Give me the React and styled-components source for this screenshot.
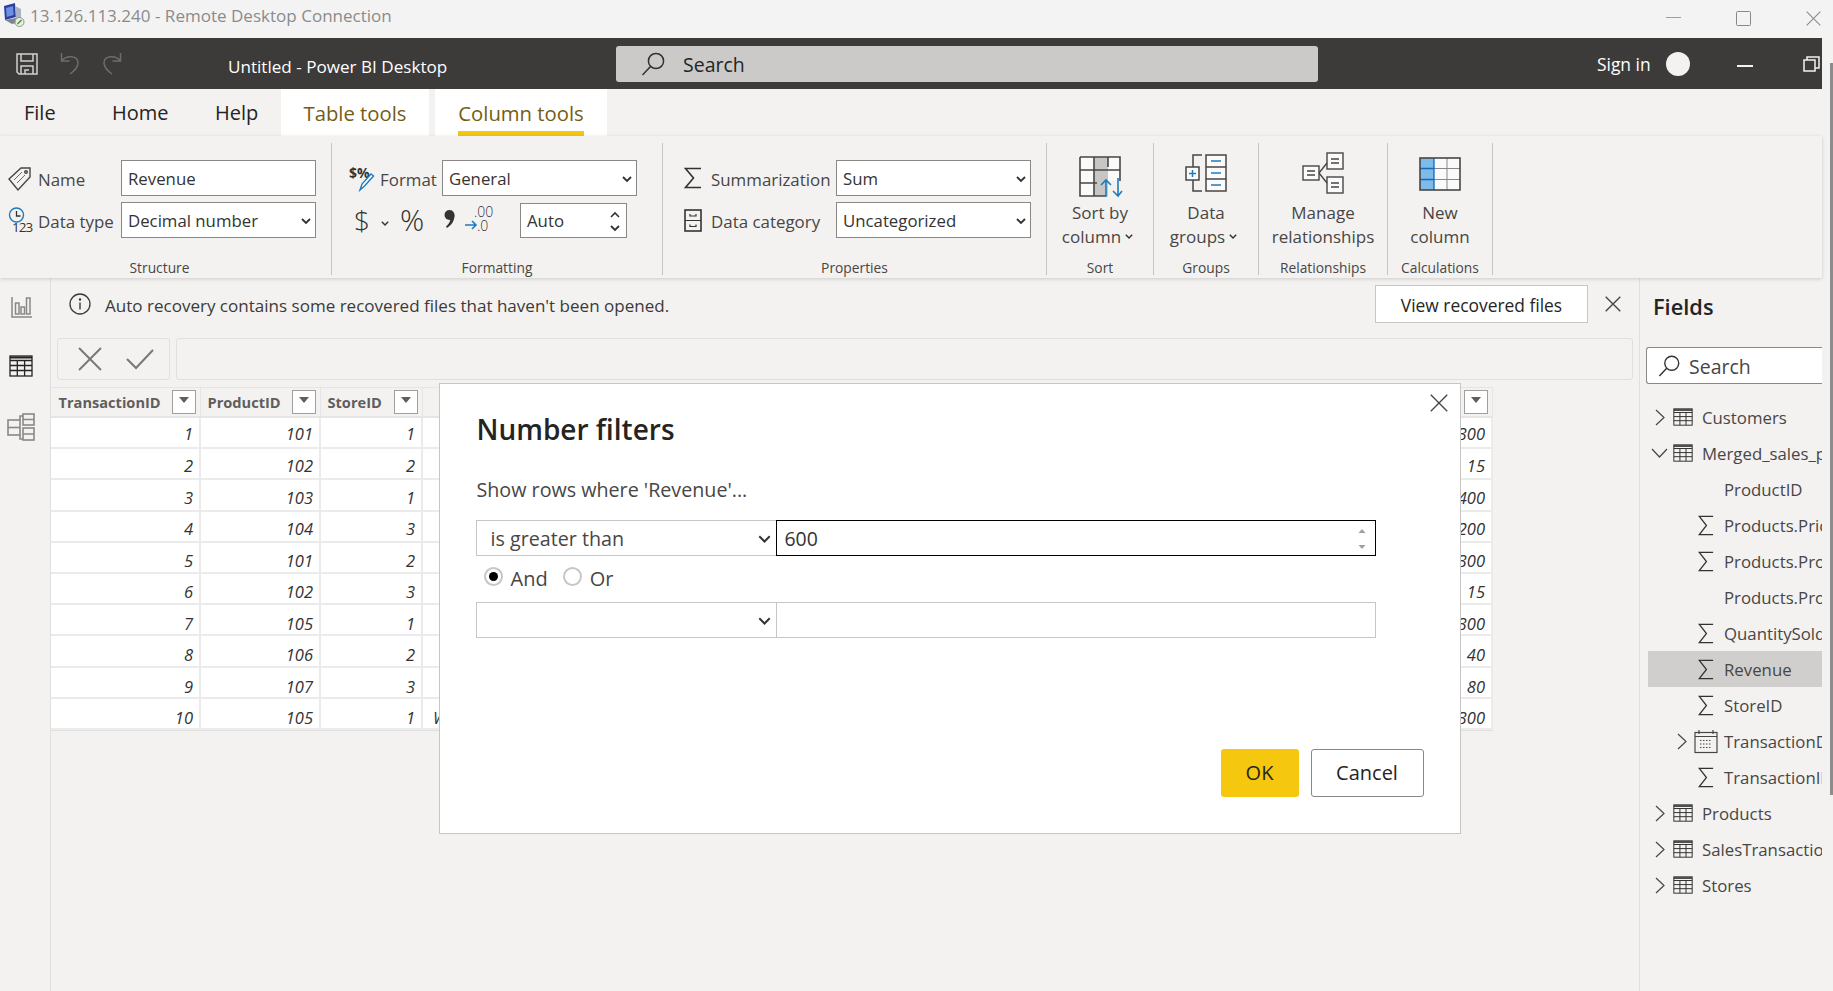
import React from "react";
import styled, { createGlobalStyle } from "styled-components";

const FONT = `"Open Sans","Noto Sans",sans-serif`;

const Global = createGlobalStyle`
  html, body { margin: 0; padding: 0; background: #f3f2f1; overflow: hidden; }
  * { box-sizing: border-box; }
  body { font-family: ${FONT}; color: #333; }
  svg { overflow: visible; flex: none; }
`;

const Page = styled.div`
  position: relative; width: 1833px; height: 991px; overflow: hidden;
  display: flex; flex-direction: column; background: #f3f2f1;
`;
const TitleBar = styled.div`
  height: 38px; flex: none; display: flex; align-items: center; padding: 0 0 8px 3px; background: #f3f3f3;
`;
const TitleText = styled.span`
  margin-left: 4px; font-size: 17.05px; color: #8b8b8b; white-space: nowrap;
`;
const WinControls = styled.div`
  margin-left: auto; display: flex; align-items: center; gap: 55px; padding-right: 12px; margin-top: 6px;
`;
const Frame = styled.div`flex: 1; display: flex; min-height: 0;`;
const Content = styled.div`width: 1822px; flex: none; display: flex; flex-direction: column; min-height: 0;`;
const Gutter = styled.div`flex: 1; padding: 25px 0 0 8px;`;
const Thumb = styled.div`width: 3px; height: 732px; background: #8c8c8c;`;

const DarkBar = styled.div`
  height: 51px; flex: none; display: flex; align-items: center; background: #3c3b3a; padding-left: 16px;
`;
const QuickIcons = styled.div`display: flex; align-items: center; gap: 22px; width: 212px;`;
const AppTitle = styled.span`width: 388px; color: #fff; font-size: 17.1px; white-space: nowrap; padding-top: 5px;`;
const TopSearch = styled.div`
  width: 702px; height: 36px; display: flex; align-items: center; gap: 18px; padding: 0 0 0 25px;
  background: #cbcac8; border-radius: 3px; color: #252423; font-size: 19.5px;
`;
const SearchWord = styled.span`padding-top: 2px;`;
const DarkRight = styled.div`
  margin-left: 279px; display: flex; align-items: center; color: #fff; font-size: 17.4px; white-space: nowrap;
`;
const SignIn = styled.span`width: 54px;`;
const Avatar = styled.span`width: 24px; height: 24px; margin: 0 47px 0 15px; border-radius: 50%; background: #f3f2f1;`;
const DashLine = styled.span`width: 16px; height: 2px; background: #f3f2f1; margin-right: 50px; margin-top: 4px;`;

const TabRow = styled.div`height: 47px; flex: none; display: flex;`;
const Tab = styled.div`
  width: ${p => p.$w}px; margin-left: ${p => p.$ml}px; display: flex; align-items: center; font-size: 20px; color: #252423; white-space: nowrap;
`;
const ContextTab = styled.div`
  width: ${p => p.$w}px; margin-left: ${p => p.$ml}px; background: #fff; display: flex; justify-content: center;
  font-size: 20.3px; color: #735d16; white-space: nowrap;
`;
const TabLabel = styled.span`
  display: flex; align-items: center; padding-top: 5px; border-bottom: 5px solid ${p => (p.$on ? "#f2c811" : "transparent")};
`;
const Ribbon = styled.div`
  height: 142px; flex: none; display: flex; padding-top: 7px; background: #f3f2f1;
  box-shadow: 0 1px 4px rgba(0,0,0,.16); position: relative; z-index: 1;
`;
const Group = styled.div`
  width: ${p => p.$w}px; height: 132px; flex: none; display: flex; flex-direction: column; border-right: 1.5px solid #c8c6c4;
`;
const GroupBody = styled.div`
  flex: 1; display: flex; flex-direction: column; gap: 6px; padding: 17px 0 0 ${p => p.$pl || 0}px;
`;
const GroupLabel = styled.div`
  height: 14px; line-height: 14px; text-align: center; font-size: 13.8px; color: #484644; white-space: nowrap;
  padding-right: ${p => p.$pr || 0}px;
`;
const FieldRow = styled.div`
  display: grid; grid-template-columns: ${p => p.$ic}px ${p => p.$lb}px 195px; grid-template-rows: 36px; align-items: center; height: 36px;
  font-size: 16.9px; color: #484644; white-space: nowrap;
`;
const FieldLabel = styled.span`padding-top: 2px;`;
const Box = styled.div`
  height: 36px; display: flex; align-items: center; justify-content: space-between; padding: 2px 4px 0 6px;
  background: #fff; border: 1.5px solid #8a8886; font-size: 16.8px; color: #333; line-height: 1.2;
`;
const NumTools = styled.div`display: flex; align-items: center; height: 36px; padding-left: 5px; color: #323130;`;
const Glyph = styled.span`width: ${p => p.$w}px; flex: none; line-height: 1; font-size: ${p => p.$fs || 16}px; font-weight: 300;`;
const AutoBox = styled(Box)`width: 107px; height: 35px; margin-left: 22px; padding-right: 6px;`;
const Spin = styled.span`display: flex; flex-direction: column; gap: 7px;`;
const BigBody = styled.div`
  flex: 1; display: flex; flex-direction: column; align-items: center; padding-top: 9px;
  font-size: 17px; line-height: 24px; color: #484644; white-space: nowrap;
`;
const BigIcon = styled.div`height: 48.5px; display: flex; align-items: flex-end; padding-bottom: ${p => p.$pb ?? 1}px;`;
const MoreLine = styled.span`display: flex; align-items: center; gap: 4px; padding-right: 5px;`;

const Body = styled.div`flex: 1; display: flex; min-height: 0;`;
const SideBar = styled.div`
  width: 51px; flex: none; display: flex; flex-direction: column; align-items: center; border-right: 1px solid #e1dfdd; padding-top: 19px;
`;
const SideSlot = styled.div`height: ${p => p.$h}px; display: flex; justify-content: center; padding-right: ${p => p.$pr ?? 9}px;`;
const Center = styled.div`width: 1588px; flex: none; display: flex; flex-direction: column;`;
const Notice = styled.div`
  height: 52px; flex: none; display: flex; align-items: center; padding: 0 18px; font-size: 17.05px; color: #3b3a39;
`;
const NoticeText = styled.span`margin-left: 14px; white-space: nowrap; flex: 1; padding-top: 2px;`;
const ViewButton = styled.div`
  width: 213px; height: 38px; display: flex; align-items: center; justify-content: center; background: #fff;
  border: 1px solid #c8c6c4; font-size: 17.4px; font-weight: 500; color: #252423; margin-right: 17px; padding-top: 1px;
`;
const FormulaRow = styled.div`display: flex; gap: 6px; height: 42px; margin: 8px 0 7px 6px; flex: none;`;
const FormulaBtns = styled.div`
  width: 113px; display: flex; align-items: center; gap: 24px; padding-left: 20px;
  border: 1px solid #e1dfdd; border-radius: 3px;
`;
const FormulaBox = styled.div`width: 1457px; border: 1px solid #e1dfdd; border-radius: 3px;`;
const Table = styled.div`
  width: 1442px; display: grid; grid-template-columns: 150px 120px 102px 990px 80px;
  grid-template-rows: 31px repeat(10, 31.2px); border-bottom: 1px solid #e1dfdd;
`;
const HeadCell = styled.div`
  display: flex; align-items: center; justify-content: space-between; padding: 0 4px 0 6.5px;
  background: #f3f2f1; border: 1px solid #e6e5e3; border-left: 0; border-bottom-width: 2px;
  font-size: 14.6px; font-weight: 700; color: #605e5c; white-space: nowrap;
  &:first-child { padding: 0 4.5px 0 7.5px; }
`;
const FilterBtn = styled.span`
  width: 24px; height: 24px; display: flex; align-items: center; justify-content: center; padding-bottom: 5px;
  background: #fff; border: 1px solid #a19f9d;
  &::after { content: ""; border: 5px solid transparent; border-top: 6px solid #605e5c; border-bottom: 0; }
`;
const Cell = styled.div`
  display: flex; align-items: center; justify-content: ${p => (p.$left ? "flex-start" : "flex-end")};
  padding: ${p => 4.3 + p.$i * 0.66}px ${p => (p.$left ? 0 : 6)}px 0 ${p => (p.$left ? 10 : 0)}px;
  background: #fff; border-right: 2px solid #ebebeb; border-bottom: 2px solid #ebebeb;
  font-size: 16.5px; font-style: italic; color: #333; line-height: 1;
`;
const FieldsPanel = styled.div`
  width: 183px; flex: none; border-left: 1px solid #e1dfdd; display: flex; flex-direction: column; overflow: hidden;
`;
const FieldsTitle = styled.div`height: 69px; padding: 11px 0 0 13px; font-size: 21.8px; line-height: 36px; font-weight: 600; color: #252423;`;
const FieldSearch = styled.div`
  margin-left: 6px; height: 37px; flex: none; display: flex; align-items: center; gap: 9px; padding-left: 11px;
  background: #fff; border: 1.5px solid #8a8886; border-right: 0; border-radius: 3px 0 0 3px; font-size: 19.5px; color: #484644;
`;
const Tree = styled.div`margin: 15px 0 0 8px;`;
const TreeRow = styled.div`
  height: 36px; display: flex; align-items: center; padding-left: ${p => p.$pl}px; white-space: nowrap; overflow: hidden;
  font-size: 16.8px; color: #484644; background: ${p => (p.$sel ? "#d0cfcd" : "transparent")};
`;
const IconSlot = styled.span`width: ${p => p.$w}px; margin-right: ${p => p.$mr}px; flex: none; display: flex; align-items: center;`;

const Dialog = styled.div`
  position: absolute; left: 439px; top: 383px; width: 1022px; height: 451px; z-index: 5; background: #fff;
  border: 1.5px solid #c8c6c4; display: flex; flex-direction: column; padding: 25.5px 36.5px 36.5px 35.5px;
`;
const DialogClose = styled.span`position: absolute; top: 10px; right: 12px; display: flex;`;
const DialogTitle = styled.div`height: 40px; margin-top: -1px; margin-bottom: 1px; padding-left: 1px; line-height: 40px; font-size: 28px; font-weight: 600; color: #252423;`;
const DialogHint = styled.div`margin-top: 26px; height: 28px; padding-left: 1px; line-height: 28px; font-size: 19.7px; color: #484644;`;
const FilterRow = styled.div`margin-top: ${p => p.$mt || 0}px; display: flex; height: 36px; flex: none; width: 900px;`;
const FilterSelect = styled.div`
  width: 300px; flex: none; display: flex; align-items: center; justify-content: space-between; padding: 2px 5px 0 14px;
  border: 1.5px solid #c8c6c4; border-right: 0; font-size: 19.7px; color: #484644;
`;
const FilterInput = styled.div`
  flex: 1; display: flex; align-items: center; justify-content: space-between; padding: 2px 9px 0 8px;
  border: 1.5px solid ${p => (p.$focus ? "#000" : "#c8c6c4")}; font-size: 19.4px; color: #333;
`;
const Radios = styled.div`height: 46px; display: flex; align-items: center; padding: 0 0 0 8px; font-size: 20px; color: #484644;`;
const Radio = styled.span`
  width: 19px; height: 19px; flex: none; margin: 0 8px 4px ${p => p.$ml || 0}px; border: 2.5px solid #c8c6c4; border-radius: 50%;
  display: flex; align-items: center; justify-content: center; background: #fff;
  &::after { content: ""; width: 9px; height: 9px; border-radius: 50%; background: ${p => (p.$on ? "#000" : "transparent")}; }
`;
const Footer = styled.div`margin-top: auto; display: flex; justify-content: flex-end; gap: 12px;`;
const DlgBtn = styled.div`
  width: ${p => p.$w}px; height: 48px; display: flex; align-items: center; justify-content: center; border-radius: 3px;
  font-size: 20px; color: #252423; background: ${p => (p.$primary ? "#f6c70f" : "#fff")};
  border: ${p => (p.$primary ? "0" : "1.5px solid #8a8886")};
`;

/* ---------- drawings ---------- */
const Chevron = ({ s = 10, c = "#333", w = 1.8 }) => (
  <svg width={s} height={s * 0.6} viewBox="0 0 10 6"><path d="M1 1l4 4 4-4" fill="none" stroke={c} strokeWidth={w} /></svg>
);
const ChevUp = () => (
  <svg width="10" height="6" viewBox="0 0 10 6"><path d="M1 5l4-4 4 4" fill="none" stroke="#333" strokeWidth="1.6" /></svg>
);
const Cross = ({ s = 16, c = "#484644", w = 1.4 }) => (
  <svg width={s} height={s} viewBox="0 0 16 16"><path d="M.7.7l14.6 14.6M15.3.7L.7 15.3" fill="none" stroke={c} strokeWidth={w} /></svg>
);
const RemoteIcon = () => (
  <svg width="23" height="25" viewBox="0 0 23 25">
    <path d="M1 3l11-3 1 14-11 3z" fill="#2b3f9e" /><path d="M3 5l7-2 .7 9-7 2z" fill="#6f8fe0" />
    <path d="M12 3l6 3v13l-5-2z" fill="#a9b2c6" /><path d="M2 17l11-2 5 4-9 2z" fill="#7d8494" />
    <circle cx="16.5" cy="19" r="4.5" fill="#e8efe4" stroke="#8b9a84" /><path d="M14.5 21l4-4" stroke="#3f9b3c" strokeWidth="1.6" />
  </svg>
);
const SaveIcon = () => (
  <svg width="22" height="22" viewBox="0 0 22 22" fill="none" stroke="#d2d0ce" strokeWidth="1.5">
    <path d="M1 1h20v20H3l-2-2z" /><path d="M5 1v7h12V1M5 21v-8h12v8M9 21v-4h4" />
  </svg>
);
const UndoIcon = ({ flip }) => (
  <svg width="20" height="23" viewBox="0 0 20 23" fill="none" stroke="#6e6d6b" strokeWidth="1.5" transform={flip ? "scale(-1 1)" : undefined}>
    <path d="M1.5 1v8h8" /><path d="M1.5 9C6 3 18 3 18 11c0 5-4 8-8 11" />
  </svg>
);
const SearchGlass = ({ s = 24, c = "#323130" }) => (
  <svg width={s} height={s} viewBox="0 0 24 24" fill="none" stroke={c} strokeWidth="1.5">
    <circle cx="15" cy="9" r="7.6" /><path d="M9.5 14.5L1.5 23" />
  </svg>
);
const TagIcon = () => (
  <svg width="23" height="25" viewBox="0 0 23 25" fill="none" stroke="#484644" strokeWidth="1.4">
    <path d="M1 13L13 2h9v9L10 24z" /><circle cx="18" cy="6" r="1.3" /><path d="M6 14l8-8M9 17l8-8" strokeWidth=".8" />
  </svg>
);
const TypeIcon = () => (
  <svg width="25" height="26" viewBox="0 0 25 26">
    <circle cx="8.5" cy="8" r="7" fill="none" stroke="#1f7bc0" strokeWidth="1.4" />
    <path d="M8.5 4v5h4" fill="none" stroke="#333" strokeWidth="1.3" />
    <text x="4" y="25" fontSize="13.5" fontFamily="Open Sans" fill="#333" letterSpacing="-1">123</text>
  </svg>
);
const FormatIcon = () => (
  <svg width="25" height="25" viewBox="0 0 25 25">
    <text x="0" y="12" fontSize="14" fontWeight="700" fontFamily="Open Sans" fill="#333">$%</text>
    <path d="M11 24l2-6 9-10 2.5 2-9 10z" fill="#fff" stroke="#1f7bc0" strokeWidth="1.4" />
  </svg>
);
const Sigma = ({ w = 18, h = 22, c = "#333", sw = 1.6 }) => (
  <svg width={w} height={h} viewBox="0 0 18 22" preserveAspectRatio="none"><path d="M17 1.5H1.5L9.5 11 1.5 20.5H17" fill="none" stroke={c} strokeWidth={sw} /></svg>
);
const CategoryIcon = () => (
  <svg width="18" height="23" viewBox="0 0 18 23" fill="none" stroke="#333" strokeWidth="1.6">
    <rect x="1" y="1" width="16" height="21" /><path d="M1 11.5h16M6 5v2h6V5M6 15.5v2h6v-2" strokeWidth="1.2" />
  </svg>
);
const Comma = () => (
  <svg width="12" height="20" viewBox="0 0 12 20"><circle cx="6.5" cy="6" r="5" fill="#333" /><path d="M11.5 6c0 6-3 10-7.5 13l-1-1.5C6 15 7.5 12 7.5 9z" fill="#333" /></svg>
);
const DecimalIcon = () => (
  <svg width="26" height="26" viewBox="0 0 26 26">
    <text x="9" y="11" fontSize="14" fontFamily="Open Sans" fill="#333">.00</text>
    <text x="12" y="25" fontSize="14" fontFamily="Open Sans" fill="#333">.0</text>
    <path d="M0 19h11M7 15l4 4-4 4" fill="none" stroke="#1f7bc0" strokeWidth="1.6" />
  </svg>
);
const SortIcon = () => (
  <svg width="42" height="42" viewBox="0 0 42 42" fill="none">
    <rect x="1" y="1" width="14" height="39" fill="#fafafa" /><rect x="29" y="1" width="13" height="24" fill="#fafafa" />
    <rect x="15" y="1" width="14" height="39" fill="#c8c6c4" />
    <path d="M1 1h40v24M1 1v39h26M1 14h40M15 1v39M29 1v10M1 27h17" stroke="#484644" strokeWidth="1.6" />
    <path d="M27 41V24M22 29l5-5 5 5" stroke="#1f7bc0" strokeWidth="1.6" /><path d="M39 22v18M34 35l5 5 4-5" stroke="#1f7bc0" strokeWidth="1.6" />
  </svg>
);
const GroupsIcon = () => (
  <svg width="42" height="38" viewBox="0 0 42 38" fill="none" stroke="#484644" strokeWidth="1.5">
    <rect x="21" y="1" width="20" height="36" fill="#fafafa" /><path d="M21 13h20M21 25h20" />
    <path d="M26 7h10M26 19h10M26 31h10" stroke="#1f7bc0" />
    <path d="M17 1H8v12M8 25v12h9" /><rect x="1" y="13" width="13" height="13" fill="#fafafa" />
    <path d="M7.5 16v7M4 19.5h7" stroke="#1f7bc0" />
  </svg>
);
const RelationIcon = () => (
  <svg width="42" height="42" viewBox="0 0 42 42" fill="none" stroke="#484644" strokeWidth="1.4">
    <rect x="1" y="14" width="16" height="14" fill="#fafafa" /><rect x="25" y="1" width="16" height="16" fill="#fafafa" /><rect x="25" y="25" width="16" height="16" fill="#fafafa" />
    <path d="M17 21l8-10M17 21l8 10M5 19h8M5 23h8M29 7h8M29 11h8M29 31h8M29 35h8" />
  </svg>
);
const NewColIcon = () => (
  <svg width="42" height="34" viewBox="0 0 42 34" fill="none">
    <rect x="1" y="1" width="40" height="32" fill="#fafafa" /><rect x="1" y="1" width="14" height="32" fill="#7fbbe9" />
    <path d="M15 11.5H41M15 22.5H41M28 1v32" stroke="#8a8886" /><path d="M1 11.5h14M1 22.5h14M15 1v32" stroke="#0f6cbd" strokeWidth="1.3" />
    <rect x="1" y="1" width="40" height="32" stroke="#484644" strokeWidth="1.6" />
  </svg>
);
const ReportIcon = () => (
  <svg width="21" height="21" viewBox="0 0 21 21" fill="none" stroke="#8a8886" strokeWidth="1.5">
    <path d="M1 0v20h20" /><rect x="4.5" y="6" width="3.5" height="11" /><rect x="10" y="10" width="3.5" height="7" /><rect x="15.5" y="1" width="3.5" height="16" />
  </svg>
);
const TableIcon = ({ w = 24, h = 22, sw = 1.3, c = "#252423" }) => (
  <svg width={w} height={h} viewBox="0 0 24 22" preserveAspectRatio="none" fill="none" stroke={c} strokeWidth={sw}>
    <rect x="1" y="1" width="22" height="20" /><path d="M1 5.5h22M1 10.5h22M1 15.5h22M8.3 5.5V21M15.6 5.5V21" />
    <path d="M1 2.5h22" strokeWidth="2" />
  </svg>
);
const ModelIcon = () => (
  <svg width="28" height="28" viewBox="0 0 28 28" fill="none" stroke="#8a8886" strokeWidth="1.6">
    <rect x="1" y="7" width="12" height="15" /><path d="M1 14.5h12" />
    <rect x="16" y="1" width="11" height="11" /><path d="M16 6.5h11M13 7V3h3" />
    <rect x="16" y="15" width="11" height="12" /><path d="M16 21h11M13 22v4h3" />
  </svg>
);
const InfoIcon = () => (
  <svg width="22" height="22" viewBox="0 0 22 22" fill="none" stroke="#3b3a39" strokeWidth="1.3">
    <circle cx="11" cy="11" r="10" /><path d="M11 9.5v7" strokeWidth="1.4" /><circle cx="11" cy="6.5" r=".6" />
  </svg>
);
const CheckIcon = () => (
  <svg width="28" height="20" viewBox="0 0 28 20"><path d="M1 10l9 9L27 1" fill="none" stroke="#7a7876" strokeWidth="2" /></svg>
);
const RightChev = () => (
  <svg width="10" height="17" viewBox="0 0 10 17"><path d="M1 1l8 7.5L1 16" fill="none" stroke="#484644" strokeWidth="1.2" /></svg>
);
const DownChev = () => (
  <svg width="17" height="10" viewBox="0 0 17 10"><path d="M1 1l7.5 8L16 1" fill="none" stroke="#484644" strokeWidth="1.2" /></svg>
);
const CalendarIcon = () => (
  <svg width="24" height="23" viewBox="0 0 24 23" fill="none" stroke="#484644" strokeWidth="1.2">
    <rect x="1" y="2.5" width="22" height="20" /><path d="M1 6.5h22M5 0v4M19 0v4" />
    <path d="M6 10.5h12M6 14h12M6 17.5h12" strokeDasharray="1.5 1.5" />
  </svg>
);
const SpinArrows = () => (
  <svg width="8" height="20" viewBox="0 0 8 20"><path d="M4 0l3.5 4H.5zM4 20L.5 16h7z" fill="#a19f9d" /></svg>
);

/* ---------- data ---------- */
const rows = [
  [1, 101, 1, "", 300], [2, 102, 2, "", 15], [3, 103, 1, "", 400], [4, 104, 3, "", 200], [5, 101, 2, "", 300],
  [6, 102, 3, "", 15], [7, 105, 1, "", 300], [8, 106, 2, "", 40], [9, 107, 3, "", 80], [10, 105, 1, "W", 300],
];
const Dropdown = ({ children }) => <Box>{children}<Chevron /></Box>;

const TableNode = ({ name, open }) => (
  <TreeRow $pl={open ? 3 : 7}>
    <IconSlot $w={open ? 17 : 10} $mr={open ? 5 : 8}>{open ? <DownChev /> : <RightChev />}</IconSlot>
    <IconSlot $w={20} $mr={9}><TableIcon w={20} h={18} sw={1.2} c="#333" /></IconSlot>
    {name}
  </TreeRow>
);
const FieldNode = ({ name, sum = true, sel }) => (
  <TreeRow $pl={50} $sel={sel}>
    <IconSlot $w={16} $mr={10}>{sum && <Sigma w={16} h={21} c="#333" sw={1.4} />}</IconSlot>
    {name}
  </TreeRow>
);

export default function App() {
  return (
    <Page>
      <Global />
      <TitleBar>
        <RemoteIcon />
        <TitleText>13.126.113.240 - Remote Desktop Connection</TitleText>
        <WinControls>
          <svg width="15" height="2"><rect width="15" height="1" fill="#a19f9d" /></svg>
          <svg width="15" height="15"><rect x=".5" y=".5" width="14" height="14" rx="1" fill="none" stroke="#8a8886" /></svg>
          <Cross s={15} c="#8a8886" w={1.1} />
        </WinControls>
      </TitleBar>
      <Frame>
        <Content>
          <DarkBar>
            <QuickIcons>
              <SaveIcon /><UndoIcon /><UndoIcon flip />
            </QuickIcons>
            <AppTitle>Untitled - Power BI Desktop</AppTitle>
            <TopSearch><SearchGlass /><SearchWord>Search</SearchWord></TopSearch>
            <DarkRight>
              <SignIn>Sign in</SignIn>
              <Avatar />
              <DashLine />
              <svg width="17" height="16" viewBox="0 0 17 16" fill="none" stroke="#f3f2f1" strokeWidth="1.5">
                <rect x="1" y="4" width="11" height="11" /><path d="M4 4V1h12v11h-4" />
              </svg>
            </DarkRight>
          </DarkBar>
          <TabRow>
            <Tab $ml={24} $w={31}>File</Tab>
            <Tab $ml={57} $w={56}>Home</Tab>
            <Tab $ml={47} $w={43}>Help</Tab>
            <ContextTab $ml={23} $w={148}><TabLabel>Table tools</TabLabel></ContextTab>
            <ContextTab $ml={6} $w={172}><TabLabel $on>Column tools</TabLabel></ContextTab>
          </TabRow>
          <Ribbon>
            <Group $w={332}>
              <GroupBody $pl={8}>
                <FieldRow $ic={30} $lb={83}><TagIcon /><FieldLabel>Name</FieldLabel><Box>Revenue</Box></FieldRow>
                <FieldRow $ic={30} $lb={83}><TypeIcon /><FieldLabel>Data type</FieldLabel><Dropdown>Decimal number</Dropdown></FieldRow>
              </GroupBody>
              <GroupLabel $pr={12}>Structure</GroupLabel>
            </Group>
            <Group $w={331}>
              <GroupBody $pl={17}>
                <FieldRow $ic={31} $lb={62}><FormatIcon /><FieldLabel>Format</FieldLabel><Dropdown>General</Dropdown></FieldRow>
                <NumTools>
                  <Glyph $w={27} $fs={28}>$</Glyph>
                  <Glyph $w={19}><Chevron s={8} /></Glyph>
                  <Glyph $w={43} $fs={30}>%</Glyph>
                  <Glyph $w={22}><Comma /></Glyph>
                  <Glyph $w={33}><DecimalIcon /></Glyph>
                  <AutoBox>Auto<Spin><ChevUp /><Chevron /></Spin></AutoBox>
                </NumTools>
              </GroupBody>
              <GroupLabel>Formatting</GroupLabel>
            </Group>
            <Group $w={384}>
              <GroupBody $pl={21}>
                <FieldRow $ic={27} $lb={125}><Sigma /><FieldLabel>Summarization</FieldLabel><Dropdown>Sum</Dropdown></FieldRow>
                <FieldRow $ic={27} $lb={125}><CategoryIcon /><FieldLabel>Data category</FieldLabel><Dropdown>Uncategorized</Dropdown></FieldRow>
              </GroupBody>
              <GroupLabel>Properties</GroupLabel>
            </Group>
            <Group $w={107}>
              <BigBody>
                <BigIcon $pb={3}><SortIcon /></BigIcon>
                <span>Sort by</span>
                <MoreLine>column<Chevron s={8} /></MoreLine>
              </BigBody>
              <GroupLabel>Sort</GroupLabel>
            </Group>
            <Group $w={105}>
              <BigBody>
                <BigIcon $pb={9}><GroupsIcon /></BigIcon>
                <span>Data</span>
                <MoreLine>groups<Chevron s={8} /></MoreLine>
              </BigBody>
              <GroupLabel>Groups</GroupLabel>
            </Group>
            <Group $w={129}>
              <BigBody>
                <BigIcon $pb={7}><RelationIcon /></BigIcon>
                <span>Manage</span>
                <span>relationships</span>
              </BigBody>
              <GroupLabel>Relationships</GroupLabel>
            </Group>
            <Group $w={105}>
              <BigBody>
                <BigIcon $pb={10}><NewColIcon /></BigIcon>
                <span>New</span>
                <span>column</span>
              </BigBody>
              <GroupLabel>Calculations</GroupLabel>
            </Group>
          </Ribbon>
          <Body>
            <SideBar>
              <SideSlot $h={58} $pr={8}><ReportIcon /></SideSlot>
              <SideSlot $h={58}><TableIcon /></SideSlot>
              <SideSlot $h={40} $pr={8}><ModelIcon /></SideSlot>
            </SideBar>
            <Center>
              <Notice>
                <InfoIcon />
                <NoticeText>Auto recovery contains some recovered files that haven't been opened.</NoticeText>
                <ViewButton>View recovered files</ViewButton>
                <Cross />
                <span />
              </Notice>
              <FormulaRow>
                <FormulaBtns><Cross s={24} c="#7a7876" w={1.3} /><CheckIcon /></FormulaBtns>
                <FormulaBox />
              </FormulaRow>
              <Table>
                <HeadCell>TransactionID<FilterBtn /></HeadCell>
                <HeadCell>ProductID<FilterBtn /></HeadCell>
                <HeadCell>StoreID<FilterBtn /></HeadCell>
                <HeadCell />
                <HeadCell><span /><FilterBtn /></HeadCell>
                {rows.map((r, i) => (
                  <React.Fragment key={r[0]}>
                    <Cell $i={i}>{r[0]}</Cell>
                    <Cell $i={i}>{r[1]}</Cell>
                    <Cell $i={i}>{r[2]}</Cell>
                    <Cell $i={i} $left>{r[3]}</Cell>
                    <Cell $i={i}>{r[4]}</Cell>
                  </React.Fragment>
                ))}
              </Table>
            </Center>
            <FieldsPanel>
              <FieldsTitle>Fields</FieldsTitle>
              <FieldSearch><SearchGlass s={22} /><SearchWord>Search</SearchWord></FieldSearch>
              <Tree>
                <TableNode name="Customers" />
                <TableNode name="Merged_sales_products" open />
                <FieldNode name="ProductID" sum={false} />
                <FieldNode name="Products.Price" />
                <FieldNode name="Products.ProductID" />
                <FieldNode name="Products.ProductName" sum={false} />
                <FieldNode name="QuantitySold" />
                <FieldNode name="Revenue" sel />
                <FieldNode name="StoreID" />
                <TreeRow $pl={29}>
                  <IconSlot $w={10} $mr={7}><RightChev /></IconSlot>
                  <IconSlot $w={24} $mr={6}><CalendarIcon /></IconSlot>
                  TransactionDate
                </TreeRow>
                <FieldNode name="TransactionID" />
                <TableNode name="Products" />
                <TableNode name="SalesTransactions" />
                <TableNode name="Stores" />
              </Tree>
            </FieldsPanel>
          </Body>
        </Content>
        <Gutter><Thumb /></Gutter>
      </Frame>

      <Dialog>
        <DialogClose><Cross s={18} c="#484644" w={1.2} /></DialogClose>
        <DialogTitle>Number filters</DialogTitle>
        <DialogHint>Show rows where 'Revenue'...</DialogHint>
        <FilterRow $mt={16}>
          <FilterSelect>is greater than<Chevron s={13} w={1.5} /></FilterSelect>
          <FilterInput $focus>600<SpinArrows /></FilterInput>
        </FilterRow>
        <Radios>
          <Radio $on />And
          <Radio $ml={15} />Or
        </Radios>
        <FilterRow>
          <FilterSelect><span /><Chevron s={13} w={1.5} /></FilterSelect>
          <FilterInput />
        </FilterRow>
        <Footer>
          <DlgBtn $primary $w={78}>OK</DlgBtn>
          <DlgBtn $w={113}>Cancel</DlgBtn>
        </Footer>
      </Dialog>
    </Page>
  );
}
